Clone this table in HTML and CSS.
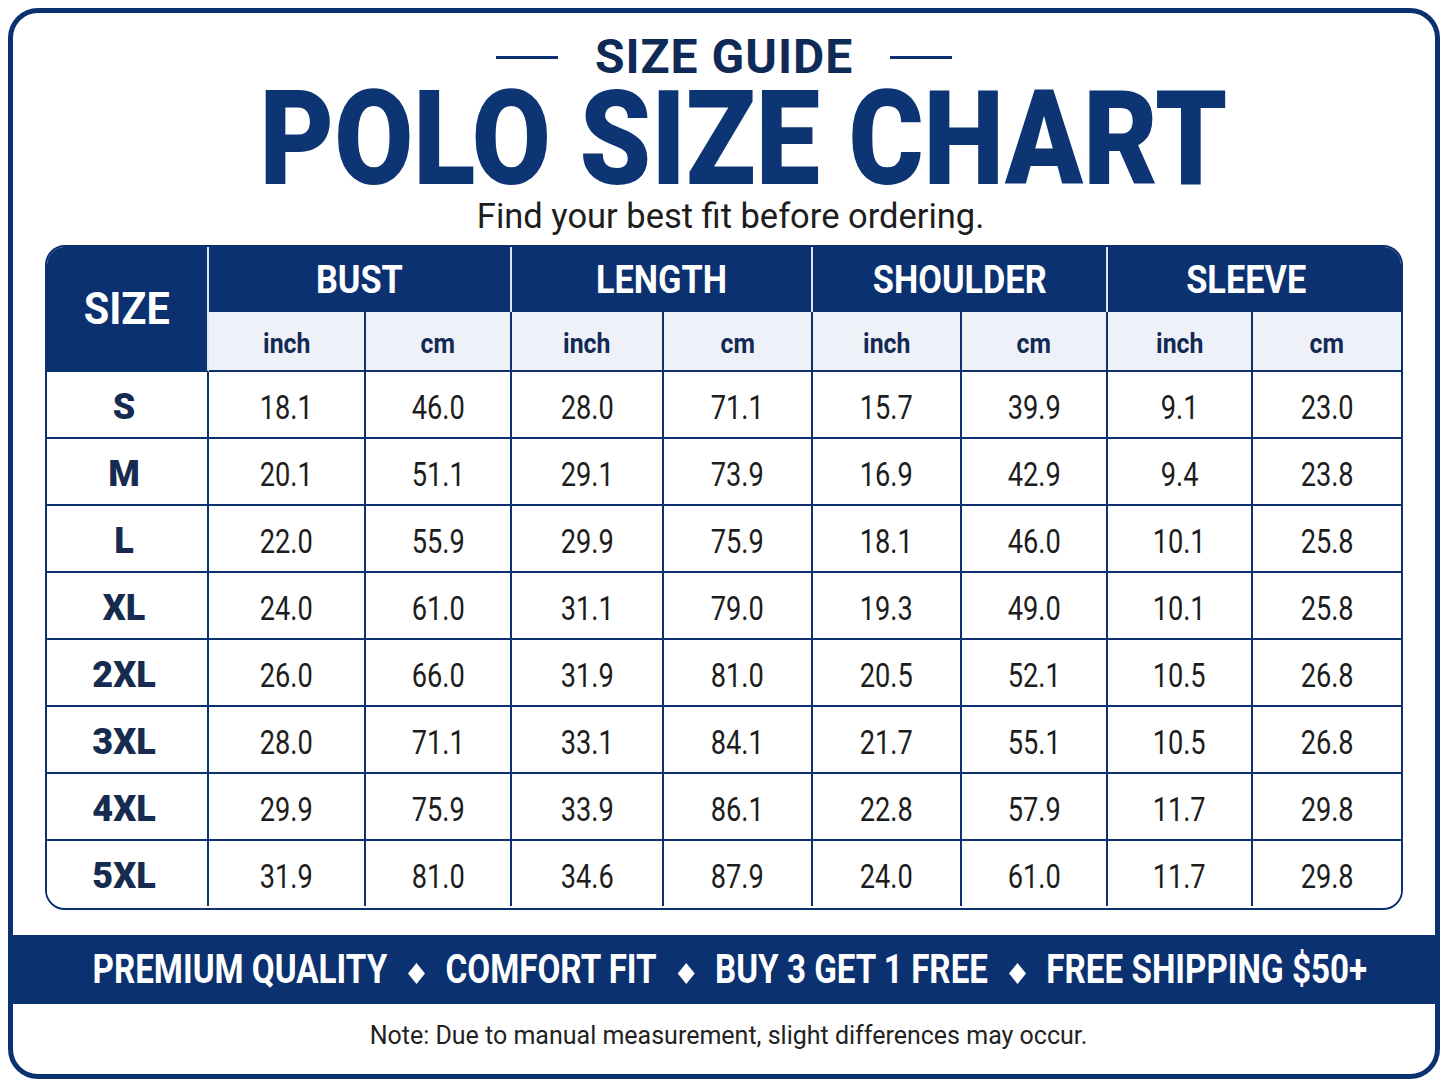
FILE: index.html
```html
<!DOCTYPE html>
<html lang="en">
<head>
<meta charset="utf-8">
<title>Polo Size Chart</title>
<link rel="stylesheet" href="styles.css">
</head>
<body>
<div class="frame">
  <div class="guide">
    <span class="rule"></span>
    <span class="guide-text">SIZE GUIDE</span>
    <span class="rule"></span>
  </div>
  <h1 class="title"><span class="sx">POLO SIZE CHART</span></h1>
  <p class="subtitle"><span class="sx">Find your best fit before ordering.</span></p>

  <div class="chart">
    <div class="h-size"><span class="sx">SIZE</span></div>
    <div class="h-group"><span class="sx">BUST</span></div>
    <div class="h-group"><span class="sx">LENGTH</span></div>
    <div class="h-group"><span class="sx">SHOULDER</span></div>
    <div class="h-group last"><span class="sx">SLEEVE</span></div>

    <div class="h-unit"><span class="sx">inch</span></div>
    <div class="h-unit"><span class="sx">cm</span></div>
    <div class="h-unit"><span class="sx">inch</span></div>
    <div class="h-unit"><span class="sx">cm</span></div>
    <div class="h-unit"><span class="sx">inch</span></div>
    <div class="h-unit"><span class="sx">cm</span></div>
    <div class="h-unit"><span class="sx">inch</span></div>
    <div class="h-unit last"><span class="sx">cm</span></div>

    <div class="c sz">S</div><div class="c"><span class="sx">18.1</span></div><div class="c"><span class="sx">46.0</span></div><div class="c"><span class="sx">28.0</span></div><div class="c"><span class="sx">71.1</span></div><div class="c"><span class="sx">15.7</span></div><div class="c"><span class="sx">39.9</span></div><div class="c"><span class="sx">9.1</span></div><div class="c last"><span class="sx">23.0</span></div>
    <div class="c sz">M</div><div class="c"><span class="sx">20.1</span></div><div class="c"><span class="sx">51.1</span></div><div class="c"><span class="sx">29.1</span></div><div class="c"><span class="sx">73.9</span></div><div class="c"><span class="sx">16.9</span></div><div class="c"><span class="sx">42.9</span></div><div class="c"><span class="sx">9.4</span></div><div class="c last"><span class="sx">23.8</span></div>
    <div class="c sz">L</div><div class="c"><span class="sx">22.0</span></div><div class="c"><span class="sx">55.9</span></div><div class="c"><span class="sx">29.9</span></div><div class="c"><span class="sx">75.9</span></div><div class="c"><span class="sx">18.1</span></div><div class="c"><span class="sx">46.0</span></div><div class="c"><span class="sx">10.1</span></div><div class="c last"><span class="sx">25.8</span></div>
    <div class="c sz">XL</div><div class="c"><span class="sx">24.0</span></div><div class="c"><span class="sx">61.0</span></div><div class="c"><span class="sx">31.1</span></div><div class="c"><span class="sx">79.0</span></div><div class="c"><span class="sx">19.3</span></div><div class="c"><span class="sx">49.0</span></div><div class="c"><span class="sx">10.1</span></div><div class="c last"><span class="sx">25.8</span></div>
    <div class="c sz">2XL</div><div class="c"><span class="sx">26.0</span></div><div class="c"><span class="sx">66.0</span></div><div class="c"><span class="sx">31.9</span></div><div class="c"><span class="sx">81.0</span></div><div class="c"><span class="sx">20.5</span></div><div class="c"><span class="sx">52.1</span></div><div class="c"><span class="sx">10.5</span></div><div class="c last"><span class="sx">26.8</span></div>
    <div class="c sz">3XL</div><div class="c"><span class="sx">28.0</span></div><div class="c"><span class="sx">71.1</span></div><div class="c"><span class="sx">33.1</span></div><div class="c"><span class="sx">84.1</span></div><div class="c"><span class="sx">21.7</span></div><div class="c"><span class="sx">55.1</span></div><div class="c"><span class="sx">10.5</span></div><div class="c last"><span class="sx">26.8</span></div>
    <div class="c sz">4XL</div><div class="c"><span class="sx">29.9</span></div><div class="c"><span class="sx">75.9</span></div><div class="c"><span class="sx">33.9</span></div><div class="c"><span class="sx">86.1</span></div><div class="c"><span class="sx">22.8</span></div><div class="c"><span class="sx">57.9</span></div><div class="c"><span class="sx">11.7</span></div><div class="c last"><span class="sx">29.8</span></div>
    <div class="c sz end">5XL</div><div class="c end"><span class="sx">31.9</span></div><div class="c end"><span class="sx">81.0</span></div><div class="c end"><span class="sx">34.6</span></div><div class="c end"><span class="sx">87.9</span></div><div class="c end"><span class="sx">24.0</span></div><div class="c end"><span class="sx">61.0</span></div><div class="c end"><span class="sx">11.7</span></div><div class="c last end"><span class="sx">29.8</span></div>
  </div>

  <div class="banner">
    <span class="banner-text">PREMIUM QUALITY<svg class="dia" viewBox="0 0 22 22" width="22" height="21"><polygon points="11,0 22,11 11,22 0,11" fill="#fff"/></svg>COMFORT FIT<svg class="dia" viewBox="0 0 22 22" width="22" height="21"><polygon points="11,0 22,11 11,22 0,11" fill="#fff"/></svg>BUY 3 GET 1 FREE<svg class="dia" viewBox="0 0 22 22" width="22" height="21"><polygon points="11,0 22,11 11,22 0,11" fill="#fff"/></svg>FREE SHIPPING $50+</span>
  </div>

  <div class="note">Note: Due to manual measurement, slight differences may occur.</div>
</div>
</body>
</html>
```
FILE: styles.css
```css
* { box-sizing: border-box; }

html, body {
  margin: 0;
  padding: 0;
  background: #ffffff;
}

body {
  font-family: Roboto, "Liberation Sans", Arial, sans-serif;
  width: 1448px;
  height: 1086px;
  overflow: hidden;
}

.sx {
  display: inline-block;
  white-space: nowrap;
  transform-origin: center center;
}

.frame {
  width: 1432px;
  height: 1071px;
  margin: 8px 0 0 8px;
  border: 5px solid #0b3170;
  border-radius: 30px;
  overflow: hidden;
  display: flex;
  flex-direction: column;
  align-items: center;
  background: #fff;
}

/* ---------- heading ---------- */
.guide {
  margin-top: 19px;
  height: 49px;
  display: flex;
  align-items: center;
  gap: 37px;
}
.rule {
  width: 62px;
  height: 3px;
  background: #0b3170;
  margin-top: 2px;
}
.guide-text {
  font-size: 48px;
  line-height: 49px;
  font-weight: 700;
  color: #0f2a57;
  letter-spacing: 1px;
}

.title {
  margin: 8px 0 0 0;
  padding-left: 38px;
  height: 100px;
  line-height: 100px;
  font-size: 132px;
  font-weight: 900;
  color: #0d3473;
  text-align: center;
}
.title .sx { transform: scaleX(0.868); }

.subtitle {
  margin: 8px 0 0 0;
  padding-left: 14px;
  height: 40px;
  line-height: 40px;
  font-size: 35px;
  font-weight: 400;
  color: #1d1d1d;
  text-align: center;
}
.subtitle .sx { transform: scaleX(0.985); }

/* ---------- chart ---------- */
.chart {
  margin-top: 8px;
  width: 1358px;
  height: 665px;
  border: 2px solid #0b3170;
  border-radius: 20px;
  overflow: hidden;
  display: grid;
  grid-template-columns: 162px 157px 146px 152px 149px 149px 146px 145px 148px;
  grid-template-rows: 65px 60px repeat(7, 67px) 65px;
}

.h-size {
  grid-row: span 2;
  background: #0b3170;
  color: #fff;
  font-weight: 700;
  font-size: 45px;
  display: flex;
  align-items: center;
  justify-content: center;
  border-right: 2px solid #dfe6f1;
  border-bottom: 2px solid #0b3170;
}
.h-size .sx { transform: scaleX(0.92); }

.h-group {
  grid-column: span 2;
  background: #0b3170;
  color: #fff;
  font-weight: 700;
  font-size: 39px;
  display: flex;
  align-items: center;
  justify-content: center;
  border-right: 2px solid #dfe6f1;
}
.h-group.last {
  border-right: none;
  padding-right: 16px;
}
.h-group .sx { transform: scaleX(0.88); }

.h-unit {
  background: #eef2f8;
  color: #132a55;
  font-weight: 700;
  font-size: 27px;
  display: flex;
  align-items: center;
  justify-content: center;
  padding-top: 6px;
  border-right: 2px solid #0b3170;
  border-bottom: 2px solid #0b3170;
}
.h-unit .sx { transform: scaleX(0.92); }
.h-unit.last { border-right: none; }

.c {
  display: flex;
  align-items: center;
  justify-content: center;
  padding-top: 4px;
  border-right: 2px solid #0b3170;
  border-bottom: 2px solid #0b3170;
  font-size: 34px;
  font-weight: 400;
  color: #1d1d1d;
  background: #fff;
}
.c .sx { transform: scaleX(0.8); }
.c.last { border-right: none; }
.c.end { border-bottom: none; }

.c.sz {
  font-weight: 900;
  font-size: 36px;
  color: #172b50;
  padding-right: 6px;
}

/* ---------- banner ---------- */
.banner {
  margin-top: 25px;
  padding-left: 12px;
  width: 100%;
  height: 69px;
  background: #0b3170;
  color: #fff;
  display: flex;
  align-items: center;
  justify-content: center;
  flex-shrink: 0;
}
.banner-text {
  display: inline-block;
  white-space: nowrap;
  font-size: 41px;
  font-weight: 700;
  line-height: 69px;
  transform: scaleX(0.81);
}
.dia {
  display: inline-block;
  margin: 0 25px;
  vertical-align: -1px;
}

/* ---------- note ---------- */
.note {
  flex: 1;
  width: 100%;
  padding-top: 17px;
  padding-left: 9px;
  text-align: center;
  font-size: 25px;
  line-height: 30px;
  color: #222;
}
```
